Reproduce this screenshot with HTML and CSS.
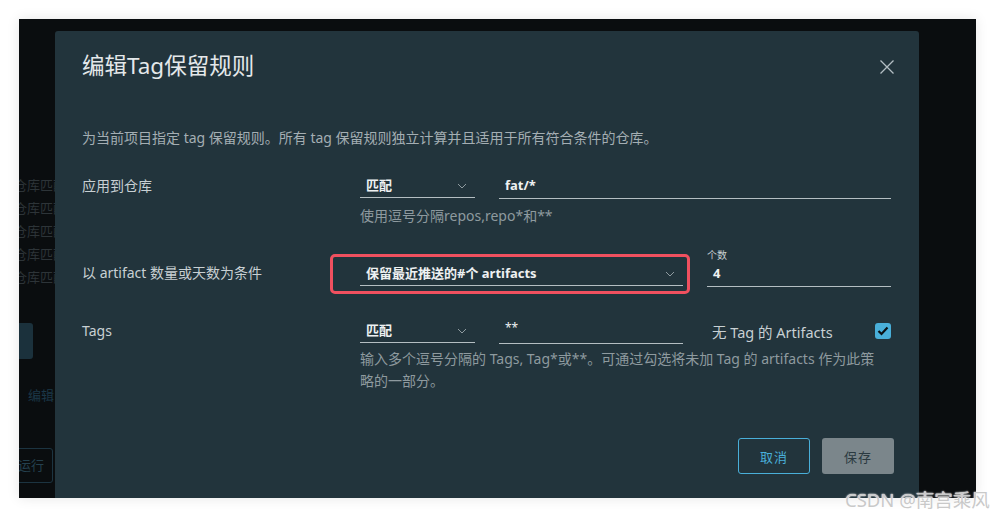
FILE: index.html
```html
<!DOCTYPE html>
<html lang="zh">
<head>
<meta charset="utf-8">
<title>编辑Tag保留规则</title>
<link rel="stylesheet" href="styles.css">
</head>
<body>
<div class="frame">
  <div class="bgpage">
    <div class="bg-row">仓库匹配</div>
    <div class="bg-row">仓库匹配</div>
    <div class="bg-row">仓库匹配</div>
    <div class="bg-row">仓库匹配</div>
    <div class="bg-row">仓库匹配</div>
    <div class="bg-btn"></div>
    <div class="bg-link">编辑</div>
    <div class="bg-outline">运行</div>
  </div>

  <div class="modal">
    <div class="modal-head">
      <h1 class="title">编辑Tag保留规则</h1>
      <button class="close" aria-label="关闭">
        <svg width="16" height="16" viewBox="0 0 16 16"><path d="M1.5 1.5 L14.5 14.5 M14.5 1.5 L1.5 14.5" stroke="#b3bec3" stroke-width="1.3" fill="none"/></svg>
      </button>
    </div>
    <p class="desc">为当前项目指定 tag 保留规则。所有 tag 保留规则独立计算并且适用于所有符合条件的仓库。</p>

    <div class="row row-1">
      <div class="label">应用到仓库</div>
      <div class="controls">
        <div class="line">
          <div class="select sel-short"><span>匹配</span><svg class="chev" width="10" height="6" viewBox="0 0 10 6"><path d="M1 1 L5 5 L9 1" stroke="#8f9ba0" stroke-width="1" fill="none"/></svg></div>
          <div class="input inp-long">fat/*</div>
        </div>
        <div class="help">使用逗号分隔repos,repo*和**</div>
      </div>
    </div>

    <div class="row row-2">
      <div class="label label-2">以 artifact 数量或天数为条件</div>
      <div class="controls line line-2">
        <div class="highlight">
          <div class="select sel-wide"><span>保留最近推送的#个 artifacts</span><svg class="chev" width="10" height="6" viewBox="0 0 10 6"><path d="M1 1 L5 5 L9 1" stroke="#8f9ba0" stroke-width="1" fill="none"/></svg></div>
        </div>
        <div class="count">
          <div class="count-label">个数</div>
          <div class="input inp-count">4</div>
        </div>
      </div>
    </div>

    <div class="row row-3">
      <div class="label">Tags</div>
      <div class="controls">
        <div class="line">
          <div class="select sel-short"><span>匹配</span><svg class="chev" width="10" height="6" viewBox="0 0 10 6"><path d="M1 1 L5 5 L9 1" stroke="#8f9ba0" stroke-width="1" fill="none"/></svg></div>
          <div class="input inp-mid inp-stars">**</div>
          <div class="check-wrap">
            <span class="check-label">无 Tag 的 Artifacts</span>
            <span class="checkbox"><svg width="12" height="10" viewBox="0 0 12 10"><path d="M1.5 5 L4.5 8 L10.5 1.5" stroke="#0b1114" stroke-width="2.2" fill="none"/></svg></span>
          </div>
        </div>
        <div class="help help-2">输入多个逗号分隔的 Tags, Tag*或**。可通过勾选将未加 Tag 的 artifacts 作为此策略的一部分。</div>
      </div>
    </div>

    <div class="actions">
      <button class="btn btn-cancel">取消</button>
      <button class="btn btn-save">保存</button>
    </div>
  </div>
</div>
<div class="watermark">CSDN @南宫乘风</div>
</body>
</html>
```

FILE: styles.css
```css
* { box-sizing: border-box; }
html, body { margin: 0; padding: 0; }
body {
  background: #ffffff;
  width: 995px;
  height: 518px;
  overflow: hidden;
  font-family: "Noto Sans", "Noto Sans CJK SC", sans-serif;
  padding: 19px 19px 0 19px;
}
.frame {
  width: 957px;
  height: 479px;
  background: #0a0d0f;
  position: relative;
  overflow: hidden;
  box-shadow: 0 0 12px rgba(0,0,0,0.10);
}

/* background page (behind the modal) */
.bgpage {
  display: flex;
  flex-direction: column;
  align-items: flex-start;
  padding-top: 155px;
}
.bg-row {
  font-size: 13px;
  line-height: 23px;
  color: #2d3438;
  margin-left: -5px;
  white-space: nowrap;
}
.bg-btn {
  margin-top: 34px;
  width: 14px;
  height: 36px;
  background: #1b313c;
  border-radius: 0 3px 3px 0;
}
.bg-link {
  margin-top: 26px;
  margin-left: 9px;
  font-size: 13px;
  line-height: 20px;
  color: #1b3747;
}
.bg-outline {
  margin-top: 43px;
  margin-left: -20px;
  width: 54px;
  height: 35px;
  border: 1px solid #1c3441;
  border-radius: 3px;
  font-size: 13px;
  line-height: 33px;
  color: #24404e;
  padding-left: 18px;
}

/* modal */
.modal {
  position: absolute;
  left: 36px;
  top: 12px;
  width: 864px;
  height: 480px;
  background: #22343c;
  border-radius: 3px 3px 0 0;
  padding: 20px 24px 0 27px;
}
.modal-head {
  display: flex;
  justify-content: space-between;
  align-items: center;
  height: 30px;
}
.title {
  margin: 0;
  font-weight: 400;
  font-size: 22.5px;
  line-height: 30px;
  color: #e4e8ea;
}
.close {
  background: none;
  border: 0;
  padding: 0;
  width: 16px;
  height: 16px;
  margin-top: 2px;
  display: flex;
}
.desc {
  margin: 47px 0 0 0;
  font-size: 14px;
  line-height: 20px;
  color: #a4aeb3;
}

.row { display: flex; align-items: flex-start; }
.row-1 { margin-top: 26px; }
.row-2 { margin-top: 28px; }
.row-3 { margin-top: 25px; }
.label {
  width: 278px;
  flex: none;
  font-size: 14px;
  line-height: 24px;
  color: #c8d0d3;
}
.label-2 { margin-top: 7px; }
.controls { display: flex; flex-direction: column; }
.line { display: flex; align-items: flex-start; }
.select {
  height: 24px;
  border-bottom: 1px solid #b4bec2;
  display: flex;
  align-items: center;
  justify-content: space-between;
  padding: 0 8px 0 6px;
  font-size: 13px;
  font-weight: 700;
  color: #eef1f2;
  line-height: 23px;
}
.chev { flex: none; }
.sel-short { width: 115px; }
.input {
  height: 25px;
  border-bottom: 1px solid #b4bec2;
  font-size: 13px;
  font-weight: 700;
  color: #eef1f2;
  line-height: 23px;
  padding-left: 6px;
}
.inp-stars { font-weight: 400; font-size: 12px; line-height: 18px; }
.inp-long { width: 392px; margin-left: 24px; }
.inp-mid { width: 184px; margin-left: 24px; }
.help {
  margin-top: 7px;
  font-size: 14px;
  line-height: 20px;
  color: #8e9a9f;
}
.help-2 {
  margin-top: 4px;
  line-height: 22px;
  width: 524px;
}

.line-2 { flex-direction: row; }
.highlight {
  margin-left: -30px;
  width: 360px;
  height: 40px;
  border: 3px solid #f0505f;
  border-radius: 5px;
  padding: 5px 4px 0 27px;
}
.sel-wide { width: 323px; }
.count {
  margin-left: 17px;
  margin-top: -6px;
  width: 184px;
  display: flex;
  flex-direction: column;
}
.count-label {
  font-size: 10px;
  line-height: 14px;
  color: #c8d0d3;
}
.inp-count { width: 184px; }

.check-wrap {
  margin-left: 29px;
  width: 179px;
  height: 24px;
  display: flex;
  align-items: center;
  justify-content: space-between;
}
.check-label {
  font-size: 14.5px;
  color: #c8d0d3;
}
.checkbox {
  width: 16px;
  height: 16px;
  border-radius: 3px;
  background: #49afd9;
  display: flex;
  align-items: center;
  justify-content: center;
}

.actions {
  display: flex;
  justify-content: flex-end;
  gap: 12px;
  margin-top: 46px;
  padding-right: 1px;
}
.btn {
  width: 72px;
  height: 36px;
  border-radius: 3px;
  font-family: "Noto Sans", "Noto Sans CJK SC", sans-serif;
  font-size: 13px;
  letter-spacing: 1px;
  padding: 0;
}
.btn-cancel {
  background: transparent;
  border: 1px solid #49afd9;
  color: #49afd9;
}
.btn-save {
  background: #7b868b;
  border: 0;
  color: #2b3a41;
}

.watermark {
  position: absolute;
  left: 845px;
  top: 486px;
  font-size: 18.5px;
  color: #c9c9c9;
  text-shadow: 0 0 1px #ffffff, 0 0 2px #ffffff;
  white-space: nowrap;
}
```
